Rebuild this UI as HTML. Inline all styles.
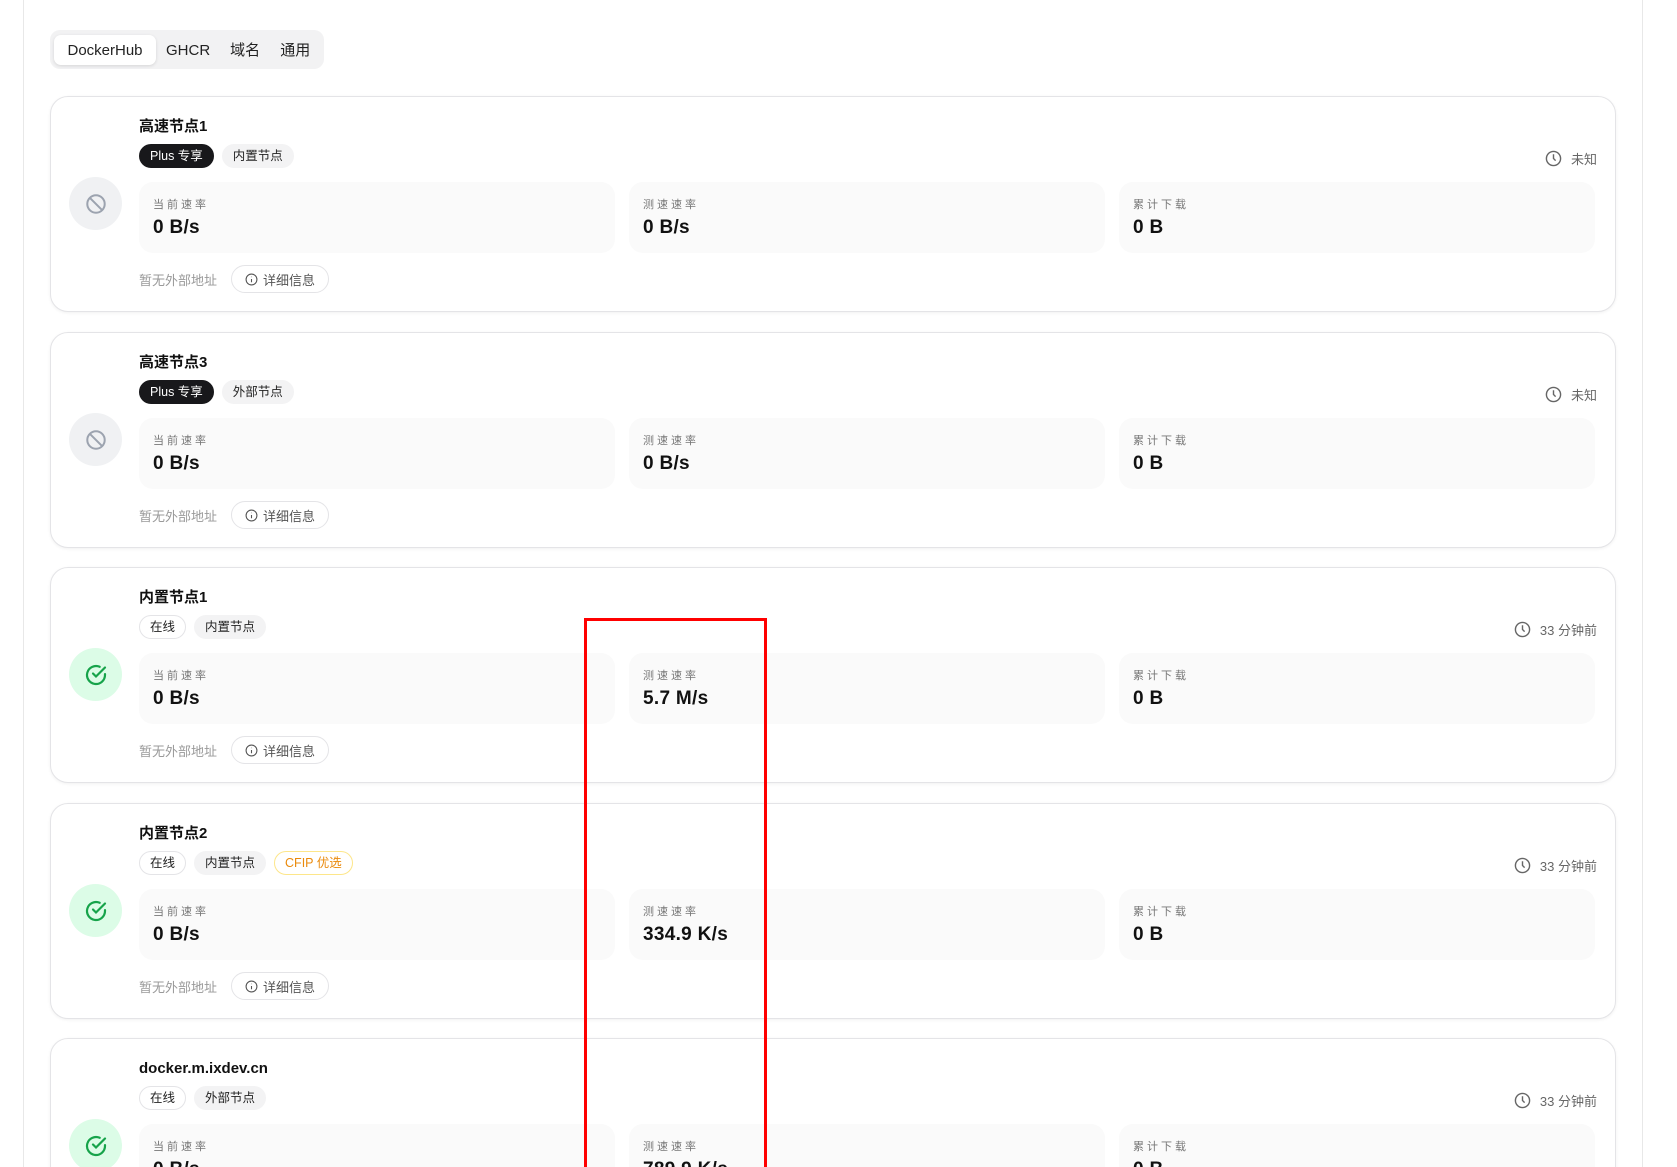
<!DOCTYPE html>
<html><head><meta charset="utf-8">
<style>
*{box-sizing:border-box;margin:0;padding:0}
html{width:1677px;height:1167px;overflow:hidden}
body{width:1677px;height:1167px;overflow:hidden;background:#fff;font-family:"Liberation Sans","Noto Sans CJK SC",sans-serif;color:#111;position:relative}
.frame{position:absolute;left:23px;top:-2px;width:1620px;height:1169px;border-left:1px solid #e8e8e8;border-right:1px solid #e8e8e8}
.tabs{position:absolute;left:50px;top:30px;height:39px;width:274px;background:#f2f2f3;border-radius:10px;display:flex;align-items:center;padding-left:4px;font-size:15px}
.tab{padding:0 10px;height:30px;line-height:32px;color:#222}
.tab.act{background:#fff;border-radius:7px;box-shadow:0 1px 3px rgba(0,0,0,.12);width:102px;text-align:center}
.card{position:absolute;left:50px;width:1566px;height:216px;border:1px solid #e4e4e7;border-radius:18px;background:#fff;box-shadow:0 1px 3px rgba(0,0,0,.06)}
.title{position:absolute;left:88px;top:19px;font-size:15px;font-weight:bold;line-height:22px}
.tags{position:absolute;left:88px;top:47px;display:flex;gap:8px}
.tag{height:24px;line-height:22px;padding:0 10px;border-radius:12px;font-size:12.5px;background:#f3f3f4;border:1px solid #f3f3f4;color:#222}
.tag.dark{background:#18181b;border-color:#18181b;color:#fff}
.tag.out{background:#fff;border-color:#e4e4e7}
.tag.cf{background:#fff;border-color:#fde68a;color:#ea8a0c}
.icon{position:absolute;left:18px;top:80px;width:53px;height:53px;border-radius:50%;display:flex;align-items:center;justify-content:center}
.icon.off{background:#f0f1f3}
.icon.on{background:#dcfce7}
.time{position:absolute;right:18px;top:52px;font-size:13px;color:#666;display:flex;align-items:center;gap:9px}
.stats{position:absolute;left:88px;top:85px;display:flex;gap:14px}
.stat{width:476px;height:71px;background:#fafafa;border-radius:14px;padding:15px 14px}
.lab{font-size:11px;color:#777;letter-spacing:3px;line-height:14px;margin-top:1px}
.val{font-size:19px;font-weight:bold;line-height:26px;margin-top:3px;letter-spacing:.3px}
.foot{position:absolute;left:88px;top:168px;display:flex;align-items:center;gap:14px;font-size:13px;color:#999}
.btn{height:28px;border:1px solid #e4e4e7;border-radius:14px;padding:0 13px;display:flex;align-items:center;gap:5px;color:#555}
.red{position:absolute;left:584px;top:618px;width:183px;height:600px;border:3px solid #f00}
</style></head><body>
<div class="frame"></div>
<div class="tabs"><div class="tab act">DockerHub</div><div class="tab">GHCR</div><div class="tab">域名</div><div class="tab">通用</div></div>

<div class="card" style="top:96px">
 <div class="icon off"><svg width="22" height="22" viewBox="0 0 24 24" fill="none" stroke="#9ca3af" stroke-width="2.2"><circle cx="12" cy="12" r="9.5"/><path d="M5.5 5.5l13 13"/></svg></div>
 <div class="title">高速节点1</div>
 <div class="tags"><span class="tag dark">Plus 专享</span><span class="tag">内置节点</span></div>
 <div class="time"><svg width="17" height="17" viewBox="0 0 24 24" fill="none" stroke="#666" stroke-width="2"><circle cx="12" cy="12" r="10"/><path d="M12 6v6l3 3"/></svg>未知</div>
 <div class="stats"><div class="stat"><div class="lab">当前速率</div><div class="val">0 B/s</div></div><div class="stat"><div class="lab">测速速率</div><div class="val">0 B/s</div></div><div class="stat"><div class="lab">累计下载</div><div class="val">0 B</div></div></div>
 <div class="foot"><span>暂无外部地址</span><span class="btn"><svg width="13" height="13" viewBox="0 0 24 24" fill="none" stroke="#555" stroke-width="2"><circle cx="12" cy="12" r="10"/><path d="M12 11v6M12 7v.5"/></svg>详细信息</span></div>
</div>

<div class="card" style="top:332px">
 <div class="icon off"><svg width="22" height="22" viewBox="0 0 24 24" fill="none" stroke="#9ca3af" stroke-width="2.2"><circle cx="12" cy="12" r="9.5"/><path d="M5.5 5.5l13 13"/></svg></div>
 <div class="title">高速节点3</div>
 <div class="tags"><span class="tag dark">Plus 专享</span><span class="tag">外部节点</span></div>
 <div class="time"><svg width="17" height="17" viewBox="0 0 24 24" fill="none" stroke="#666" stroke-width="2"><circle cx="12" cy="12" r="10"/><path d="M12 6v6l3 3"/></svg>未知</div>
 <div class="stats"><div class="stat"><div class="lab">当前速率</div><div class="val">0 B/s</div></div><div class="stat"><div class="lab">测速速率</div><div class="val">0 B/s</div></div><div class="stat"><div class="lab">累计下载</div><div class="val">0 B</div></div></div>
 <div class="foot"><span>暂无外部地址</span><span class="btn"><svg width="13" height="13" viewBox="0 0 24 24" fill="none" stroke="#555" stroke-width="2"><circle cx="12" cy="12" r="10"/><path d="M12 11v6M12 7v.5"/></svg>详细信息</span></div>
</div>

<div class="card" style="top:567px">
 <div class="icon on"><svg width="24" height="24" viewBox="0 0 24 24" fill="none" stroke="#16a34a" stroke-width="2.2" stroke-linecap="round"><path d="M21 11.1V12a9 9 0 1 1-5.3-8.2"/><path d="M21 4.5L12 13.5l-3-3"/></svg></div>
 <div class="title">内置节点1</div>
 <div class="tags"><span class="tag out">在线</span><span class="tag">内置节点</span></div>
 <div class="time"><svg width="17" height="17" viewBox="0 0 24 24" fill="none" stroke="#666" stroke-width="2"><circle cx="12" cy="12" r="10"/><path d="M12 6v6l3 3"/></svg>33 分钟前</div>
 <div class="stats"><div class="stat"><div class="lab">当前速率</div><div class="val">0 B/s</div></div><div class="stat"><div class="lab">测速速率</div><div class="val">5.7 M/s</div></div><div class="stat"><div class="lab">累计下载</div><div class="val">0 B</div></div></div>
 <div class="foot"><span>暂无外部地址</span><span class="btn"><svg width="13" height="13" viewBox="0 0 24 24" fill="none" stroke="#555" stroke-width="2"><circle cx="12" cy="12" r="10"/><path d="M12 11v6M12 7v.5"/></svg>详细信息</span></div>
</div>

<div class="card" style="top:803px">
 <div class="icon on"><svg width="24" height="24" viewBox="0 0 24 24" fill="none" stroke="#16a34a" stroke-width="2.2" stroke-linecap="round"><path d="M21 11.1V12a9 9 0 1 1-5.3-8.2"/><path d="M21 4.5L12 13.5l-3-3"/></svg></div>
 <div class="title">内置节点2</div>
 <div class="tags"><span class="tag out">在线</span><span class="tag">内置节点</span><span class="tag cf">CFIP 优选</span></div>
 <div class="time"><svg width="17" height="17" viewBox="0 0 24 24" fill="none" stroke="#666" stroke-width="2"><circle cx="12" cy="12" r="10"/><path d="M12 6v6l3 3"/></svg>33 分钟前</div>
 <div class="stats"><div class="stat"><div class="lab">当前速率</div><div class="val">0 B/s</div></div><div class="stat"><div class="lab">测速速率</div><div class="val">334.9 K/s</div></div><div class="stat"><div class="lab">累计下载</div><div class="val">0 B</div></div></div>
 <div class="foot"><span>暂无外部地址</span><span class="btn"><svg width="13" height="13" viewBox="0 0 24 24" fill="none" stroke="#555" stroke-width="2"><circle cx="12" cy="12" r="10"/><path d="M12 11v6M12 7v.5"/></svg>详细信息</span></div>
</div>

<div class="card" style="top:1038px">
 <div class="icon on"><svg width="24" height="24" viewBox="0 0 24 24" fill="none" stroke="#16a34a" stroke-width="2.2" stroke-linecap="round"><path d="M21 11.1V12a9 9 0 1 1-5.3-8.2"/><path d="M21 4.5L12 13.5l-3-3"/></svg></div>
 <div class="title">docker.m.ixdev.cn</div>
 <div class="tags"><span class="tag out">在线</span><span class="tag">外部节点</span></div>
 <div class="time"><svg width="17" height="17" viewBox="0 0 24 24" fill="none" stroke="#666" stroke-width="2"><circle cx="12" cy="12" r="10"/><path d="M12 6v6l3 3"/></svg>33 分钟前</div>
 <div class="stats"><div class="stat"><div class="lab">当前速率</div><div class="val">0 B/s</div></div><div class="stat"><div class="lab">测速速率</div><div class="val">789.9 K/s</div></div><div class="stat"><div class="lab">累计下载</div><div class="val">0 B</div></div></div>
</div>

<div class="red"></div>
</body></html>
